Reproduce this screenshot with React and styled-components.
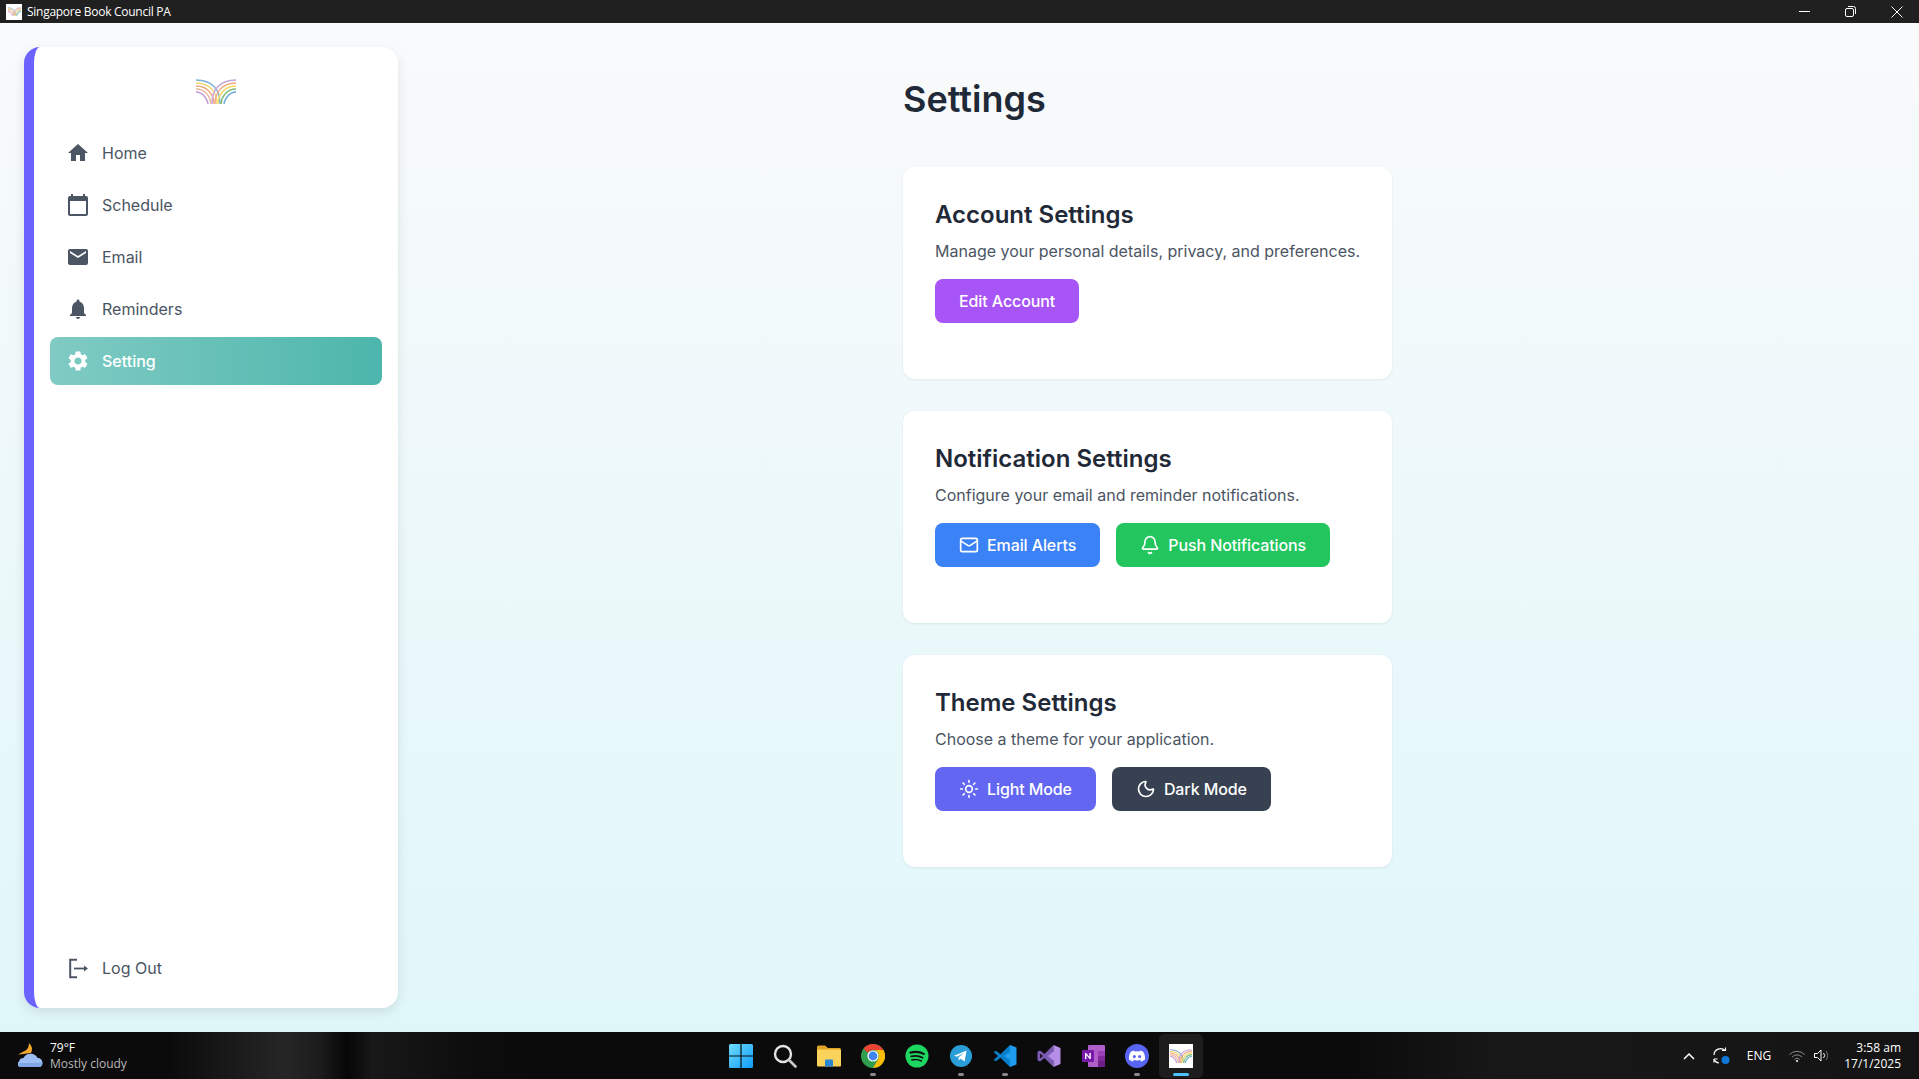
import React from "react";
import styled, { createGlobalStyle } from "styled-components";
import { MdHome, MdCalendarToday, MdEmail, MdNotifications, MdSettings } from "react-icons/md";
import { Mail, Bell, Sun, Moon } from "lucide-react";

const Global = createGlobalStyle`
  * { box-sizing: border-box; }
  html, body { margin: 0; padding: 0; height: 100%; overflow: hidden; }
  body { font-family: Inter, "Liberation Sans", sans-serif; }
`;

const Shell = styled.div`
  display: flex;
  flex-direction: column;
  height: 100vh;
`;

const TitleBar = styled.header`
  flex: 0 0 23px;
  background: #202020;
  display: flex;
  align-items: center;
  padding: 0 0 0 6px;
  color: #fff;
  font: 400 12px "Open Sans", "Noto Sans", sans-serif;
`;

const AppTile = styled.span`
  width: ${p => p.$size}px;
  height: ${p => p.$size}px;
  background: #fff;
  display: flex;
  align-items: center;
  justify-content: center;
  flex: none;
`;

const TitleText = styled.span`
  margin-left: 5px;
  flex: 1;
  letter-spacing: -0.27px;
`;

const WinButtons = styled.div`
  display: flex;
  height: 100%;
  align-items: center;
  padding-right: 16px;
  gap: 35px;
`;

const Body = styled.div`
  flex: 1;
  min-height: 0;
  display: flex;
  background: linear-gradient(to bottom, #f9fafb, #e0f7fa);
`;

const Sidebar = styled.aside`
  width: 374px;
  margin: 24px 0 24px 24px;
  background: #fff;
  border-left: 10px solid #6c63ff;
  border-radius: 16px;
  box-shadow: 0 4px 12px rgba(0, 0, 0, 0.1);
  display: flex;
  flex-direction: column;
  padding: 32px 16px 16px;
`;

const LogoWrap = styled.div`
  display: flex;
  justify-content: center;
  height: 25px;
  margin-bottom: 25px;
`;

const Nav = styled.nav`
  display: flex;
  flex-direction: column;
  gap: 4px;
  flex: 1;
`;

const NavItem = styled.div`
  display: flex;
  align-items: center;
  gap: 12px;
  height: 48px;
  padding: 0 16px;
  border-radius: 8px;
  font-size: 16px;
  color: ${p => (p.$active ? "#fff" : "#4b5563")};
  background: ${p => (p.$active ? "linear-gradient(to right, #80cbc4, #4db6ac)" : "transparent")};
  font-weight: ${p => (p.$active ? 500 : 400)};
  svg { flex: none; }
`;

const Main = styled.main`
  flex: 1;
  display: flex;
  justify-content: center;
  padding: 56px 22px 0 0;
`;

const Column = styled.div`
  width: 489px;
  display: flex;
  flex-direction: column;
`;

const PageTitle = styled.h1`
  margin: 0 0 48px;
  font-size: 36px;
  line-height: 40px;
  font-weight: 600;
  color: #1f2937;
`;

const Cards = styled.div`
  display: flex;
  flex-direction: column;
  gap: 32px;
`;

const Card = styled.section`
  height: 212px;
  background: #fff;
  border-radius: 12px;
  box-shadow: 0 1px 3px rgba(0, 0, 0, 0.07);
  padding: 32px;
`;

const CardTitle = styled.h2`
  margin: 0 0 8px;
  font-size: 24px;
  line-height: 32px;
  font-weight: 600;
  color: #1f2937;
`;

const CardText = styled.p`
  margin: 0 0 16px;
  font-size: 16px;
  line-height: 24px;
  color: #4b5563;
  white-space: nowrap;
`;

const ButtonRow = styled.div`
  display: flex;
  gap: 16px;
`;

const Button = styled.button`
  display: inline-flex;
  align-items: center;
  gap: 8px;
  height: 44px;
  padding: 0 24px;
  border: 0;
  border-radius: 8px;
  background: ${p => p.$bg};
  color: #fff;
  font: 500 16px Inter, sans-serif;
  letter-spacing: -0.1px;
`;

const Taskbar = styled.footer`
  flex: 0 0 47px;
  display: grid;
  grid-template-columns: 1fr auto 1fr;
  align-items: center;
  color: #fff;
  font: 400 12px "Open Sans", "Noto Sans", sans-serif;
  background:
    linear-gradient(to right, transparent 170px, #262626 285px, #1c1c1c 320px, #060606 347px, #181818 372px, #0c0c0c 480px, transparent 560px),
    linear-gradient(to right, transparent 1350px, #181818 1500px, #141414 1919px),
    #0b0b0b;
`;

const Weather = styled.div`
  display: flex;
  align-items: center;
  gap: 7px;
  padding-left: 18px;
`;

const TwoLines = styled.div`
  display: flex;
  flex-direction: column;
  line-height: 16px;
  text-align: ${p => p.$align || "left"};
`;

const Muted = styled.span`
  color: #b8b8b8;
`;

const TaskIcons = styled.div`
  display: flex;
  align-items: center;
  padding-left: 2px;
`;

const TaskSlot = styled.div`
  position: relative;
  width: 44px;
  height: 44px;
  display: flex;
  align-items: center;
  justify-content: center;
  border-radius: 5px;
  background: ${p => (p.$current ? "#1d1d1d" : "transparent")};
  &::after {
    content: "";
    display: ${p => (p.$mark ? "block" : "none")};
    position: absolute;
    bottom: 2px;
    left: 50%;
    transform: translateX(-50%);
    width: ${p => (p.$current ? 16 : 6)}px;
    height: 3px;
    border-radius: 2px;
    background: ${p => (p.$current ? "#4cc2ff" : "#8a8a8a")};
  }
`;

const Tray = styled.div`
  display: flex;
  align-items: center;
  justify-content: flex-end;
  padding-right: 18px;
`;

const TrayGlyph = styled.span`
  display: flex;
  align-items: center;
  margin-right: ${p => p.$mr}px;
`;

const Logo = ({ w = 40, h = 25, sw = 1.4 }) => {
  const left = [["#7fb2d8", 1], ["#f5d570", 4], ["#f0a97e", 7], ["#f0b898", 10], ["#c19ad2", 13]];
  const right = [["#c5a6d8", 1], ["#f0a97e", 4], ["#f5d860", 7], ["#7cbd7c", 10], ["#6dabd8", 13]];
  return (
    <svg width={w} height={h} viewBox="0 0 40 25" fill="none" strokeWidth={sw}>
      {left.map(([c, y]) => (
        <path key={y} d={`M0 ${y}C${(25 - y) * 0.7} ${y} ${25 - y} ${y + 10} ${25 - y} 25`} stroke={c} />
      ))}
      {right.map(([c, y]) => (
        <path key={y} d={`M40 ${y}C${40 - (25 - y) * 0.7} ${y} ${15 + y} ${y + 10} ${15 + y} 25`} stroke={c} />
      ))}
    </svg>
  );
};

const LogoutIcon = () => (
  <svg width="24" height="24" viewBox="0 0 24 24" fill="none" stroke="#4b5563">
    <path d="M11 3.8H4.2V21.2H11" strokeWidth="2" />
    <path d="M8 12.5H18" strokeWidth="1.8" />
    <path d="M18 9.5L22 12.5L18 15.5Z" fill="#4b5563" stroke="none" />
  </svg>
);

const WinLogo = () => (
  <svg width="24" height="24" viewBox="0 0 24 24">
    <defs>
      <linearGradient id="wl" x1="0" y1="0" x2="1" y2="1">
        <stop offset="0" stopColor="#6fdcff" />
        <stop offset="1" stopColor="#0f9cf5" />
      </linearGradient>
    </defs>
    <path fill="url(#wl)" d="M0 1.5A1.5 1.5 0 0 1 1.5 0H11.4V11.4H0ZM12.6 0H22.5A1.5 1.5 0 0 1 24 1.5V11.4H12.6ZM0 12.6H11.4V24H1.5A1.5 1.5 0 0 1 0 22.5ZM12.6 12.6H24V22.5A1.5 1.5 0 0 1 22.5 24H12.6Z" />
  </svg>
);

const SearchIcon = () => (
  <svg width="24" height="24" viewBox="0 0 24 24" fill="none">
    <circle cx="10" cy="10" r="8" stroke="#e4e4e4" strokeWidth="2.4" />
    <path d="M16 16L22.5 22.5" stroke="#c9c9c9" strokeWidth="2.6" strokeLinecap="round" />
  </svg>
);

const FolderIcon = () => (
  <svg width="24" height="24" viewBox="0 0 24 24">
    <path fill="#e0a526" d="M0 3A1.5 1.5 0 0 1 1.5 1.5H8L11 4H22.5A1.5 1.5 0 0 1 24 5.5V8H0Z" />
    <path fill="#fbd25a" d="M0 5.5H22.5A1.5 1.5 0 0 1 24 7V21.5A1 1 0 0 1 23 22.5H1A1 1 0 0 1 0 21.5Z" />
    <path fill="#2b87d3" d="M8 16.5A1 1 0 0 1 9 15.5H15A1 1 0 0 1 16 16.5V22.5H8Z" />
  </svg>
);

const ChromeIcon = () => (
  <svg width="24" height="24" viewBox="0 0 24 24">
    <circle cx="12" cy="12" r="12" fill="#2f9e4f" />
    <path fill="#ea4335" d="M12 0A12 12 0 0 1 22.4 6H12A6 6 0 0 0 6.8 9L2.6 4.6A12 12 0 0 1 12 0Z" />
    <path fill="#fbbc05" d="M22.4 6A12 12 0 0 1 12 24L17.2 15A6 6 0 0 0 12 6Z" />
    <circle cx="12" cy="12" r="5.6" fill="#fff" />
    <circle cx="12" cy="12" r="4.4" fill="#3f83ee" />
  </svg>
);

const SpotifyIcon = () => (
  <svg width="24" height="24" viewBox="0 0 24 24" fill="none" stroke="#111" strokeLinecap="round">
    <circle cx="12" cy="12" r="11.5" fill="#1ed760" stroke="none" />
    <path d="M5.5 8.6C10 7.3 15 7.7 18.8 9.9" strokeWidth="2.2" />
    <path d="M6.2 12.4C10 11.4 14.4 11.8 17.6 13.7" strokeWidth="1.8" />
    <path d="M6.8 15.9C10 15.2 13.6 15.4 16.4 17" strokeWidth="1.5" />
  </svg>
);

const TelegramIcon = () => (
  <svg width="24" height="24" viewBox="0 0 24 24">
    <circle cx="12" cy="12" r="11" fill="#2a9ed8" />
    <path fill="#fff" d="M5 11.8L17.6 6.6L15.6 17.6L11.6 14.8L9.8 16.6L9.4 13.4L15.2 8.8L8 12.8Z" />
  </svg>
);

const VSCodeIcon = () => (
  <svg width="24" height="24" viewBox="0 0 24 24">
    <path fill="#0a7fcb" d="M17 1L7.5 10.2L3 6.8L.5 8L5 12L.5 16L3 17.2L7.5 13.8L17 23Z" />
    <path fill="#1f9cf0" d="M17 1L23.5 3.6V20.4L17 23V16L11 12L17 8Z" />
  </svg>
);

const VSIcon = () => (
  <svg width="24" height="24" viewBox="0 0 24 24">
    <path fill="#7b5bb5" d="M16.5 1L7.5 10L3 6.4L.5 7.8V16.2L3 17.6L7.5 14L16.5 23ZM3.2 9.6L6 12L3.2 14.4Z" />
    <path fill="#b58ee6" d="M16.5 1L23.5 4V20L16.5 23V16.5L11 12L16.5 7.5Z" />
  </svg>
);

const OneNoteIcon = () => (
  <svg width="24" height="24" viewBox="0 0 24 24">
    <rect x="7" y="1" width="17" height="22" rx="1" fill="#b05fc9" />
    <rect x="17" y="7" width="7" height="5" fill="#9b3fb8" />
    <rect x="17" y="12" width="7" height="5" fill="#842a9f" />
    <rect x="17" y="17" width="7" height="6" fill="#6f1f8a" />
    <rect x="1" y="6" width="12" height="12" rx="1" fill="#7719aa" />
    <path d="M4 15V9H5.2L8.4 13V9H9.8V15H8.6L5.4 11V15Z" fill="#fff" />
  </svg>
);

const DiscordIcon = () => (
  <svg width="24" height="24" viewBox="0 0 24 24">
    <circle cx="12" cy="12" r="12" fill="#5865f2" />
    <path fill="#fff" d="M18 7.6A13 13 0 0 0 14.8 6.6L14.4 7.4A12 12 0 0 0 9.6 7.4L9.2 6.6A13 13 0 0 0 6 7.6C4.2 10.3 3.7 13 4 15.6A13 13 0 0 0 8 17.6L8.8 16.3L7.6 15.7L7.9 15.5A9 9 0 0 0 16.1 15.5L16.4 15.7L15.2 16.3L16 17.6A13 13 0 0 0 20 15.6C20.3 12.6 19.6 10 18 7.6Z" />
    <ellipse cx="9.4" cy="12.6" rx="1.5" ry="1.7" fill="#5865f2" />
    <ellipse cx="14.6" cy="12.6" rx="1.5" ry="1.7" fill="#5865f2" />
  </svg>
);

const CloudIcon = () => (
  <svg width="25" height="25" viewBox="0 0 25 25">
    <path fill="#f3a62d" d="M11 0C14 3 15 6 13 10L5 11L0 11.5L5.5 8.5C9 7.5 11 4 11 0Z" />
    <path fill="#9cbef2" d="M3 24A3 3 0 0 1 1 18.5C1.5 16 3.5 15 5.5 15C7 11.5 11 10 15 11C18 12 19 14 19.5 15C22.5 15 24.5 17 24.5 20C24.5 22.5 23 24 21 24Z" />
    <path fill="#7fa6e6" d="M3 24A3 3 0 0 1 .8 20H24.4C24 22.5 23 24 21 24Z" />
  </svg>
);

const taskIcons = [
  { c: <WinLogo /> },
  { c: <SearchIcon /> },
  { c: <FolderIcon /> },
  { c: <ChromeIcon />, mark: true },
  { c: <SpotifyIcon /> },
  { c: <TelegramIcon />, mark: true },
  { c: <VSCodeIcon />, mark: true },
  { c: <VSIcon /> },
  { c: <OneNoteIcon /> },
  { c: <DiscordIcon />, mark: true },
];

const navItems = [
  ["Home", MdHome],
  ["Schedule", MdCalendarToday],
  ["Email", MdEmail],
  ["Reminders", MdNotifications],
  ["Setting", MdSettings, true],
];

export default function App() {
  return (
    <Shell>
      <Global />
      <TitleBar>
        <AppTile $size={16}><Logo w={13} h={9} sw={2.4} /></AppTile>
        <TitleText>Singapore Book Council PA</TitleText>
        <WinButtons>
          <svg width="11" height="11" viewBox="0 0 11 11" stroke="#fff"><path d="M0 5.5H11" /></svg>
          <svg width="11" height="11" viewBox="0 0 11 11" fill="none" stroke="#fff"><rect x=".5" y="2.5" width="8" height="8" rx="1.5" /><path d="M3 .5H8.5A2 2 0 0 1 10.5 2.5V8" /></svg>
          <svg width="12" height="12" viewBox="0 0 12 12" stroke="#fff"><path d="M.5 .5L11.5 11.5M11.5 .5L.5 11.5" /></svg>
        </WinButtons>
      </TitleBar>
      <Body>
        <Sidebar>
          <LogoWrap><Logo /></LogoWrap>
          <Nav>
            {navItems.map(([label, Icon, active]) => (
              <NavItem key={label} $active={active}>
                <Icon size={24} />
                {label}
              </NavItem>
            ))}
          </Nav>
          <NavItem>
            <LogoutIcon />
            Log Out
          </NavItem>
        </Sidebar>
        <Main>
          <Column>
            <PageTitle>Settings</PageTitle>
            <Cards>
              <Card>
                <CardTitle>Account Settings</CardTitle>
                <CardText>Manage your personal details, privacy, and preferences.</CardText>
                <ButtonRow>
                  <Button $bg="#a855f7">Edit Account</Button>
                </ButtonRow>
              </Card>
              <Card>
                <CardTitle>Notification Settings</CardTitle>
                <CardText>Configure your email and reminder notifications.</CardText>
                <ButtonRow>
                  <Button $bg="#3b82f6"><Mail size={20} />Email Alerts</Button>
                  <Button $bg="#22c55e"><Bell size={20} />Push Notifications</Button>
                </ButtonRow>
              </Card>
              <Card>
                <CardTitle>Theme Settings</CardTitle>
                <CardText>Choose a theme for your application.</CardText>
                <ButtonRow>
                  <Button $bg="#6366f1"><Sun size={20} />Light Mode</Button>
                  <Button $bg="#374151"><Moon size={20} />Dark Mode</Button>
                </ButtonRow>
              </Card>
            </Cards>
          </Column>
        </Main>
      </Body>
      <Taskbar>
        <Weather>
          <CloudIcon />
          <TwoLines>
            <span>79°F</span>
            <Muted>Mostly cloudy</Muted>
          </TwoLines>
        </Weather>
        <TaskIcons>
          {taskIcons.map((t, i) => (
            <TaskSlot key={i} $mark={t.mark}>{t.c}</TaskSlot>
          ))}
          <TaskSlot $mark $current><AppTile $size={24}><Logo w={22} h={14} sw={2} /></AppTile></TaskSlot>
        </TaskIcons>
        <Tray>
          <TrayGlyph $mr={17}>
            <svg width="12" height="8" viewBox="0 0 12 8" fill="none" stroke="#fff" strokeWidth="1.5"><path d="M1 7L6 2L11 7" /></svg>
          </TrayGlyph>
          <TrayGlyph $mr={17}>
            <svg width="18" height="18" viewBox="0 0 18 18" fill="none" stroke="#fff" strokeWidth="1.2">
              <path d="M2 8A6.5 6.5 0 0 1 13 3.5M10 3.5H13.5V0.5M2 12V15.5M2 12H5.5" />
              <path d="M2 12.5A6 6 0 0 0 7 16" />
              <circle cx="13.5" cy="13" r="4" fill="#0f78d8" stroke="none" />
            </svg>
          </TrayGlyph>
          <TrayGlyph $mr={18}>ENG</TrayGlyph>
          <TrayGlyph $mr={9}>
            <svg width="16" height="12" viewBox="0 0 16 12" fill="none" stroke="#8a8a8a"><path d="M.5 4.5A10.5 10.5 0 0 1 15.5 4.5M3 7A7 7 0 0 1 13 7M5.4 9.4A3.6 3.6 0 0 1 10.6 9.4" /><circle cx="8" cy="11" r="1" fill="#fff" stroke="none" /></svg>
          </TrayGlyph>
          <TrayGlyph $mr={14}>
            <svg width="16" height="13" viewBox="0 0 16 13" fill="none" stroke="#fff"><path d="M.5 4.5H3.5L7 1V12L3.5 8.5H.5Z" /><path d="M9.5 4A3.5 3.5 0 0 1 9.5 9" /><path d="M12 2A7 7 0 0 1 12 11" stroke="#777" /></svg>
          </TrayGlyph>
          <TwoLines $align="right">
            <span>3:58 am</span>
            <span>17/1/2025</span>
          </TwoLines>
        </Tray>
      </Taskbar>
    </Shell>
  );
}
